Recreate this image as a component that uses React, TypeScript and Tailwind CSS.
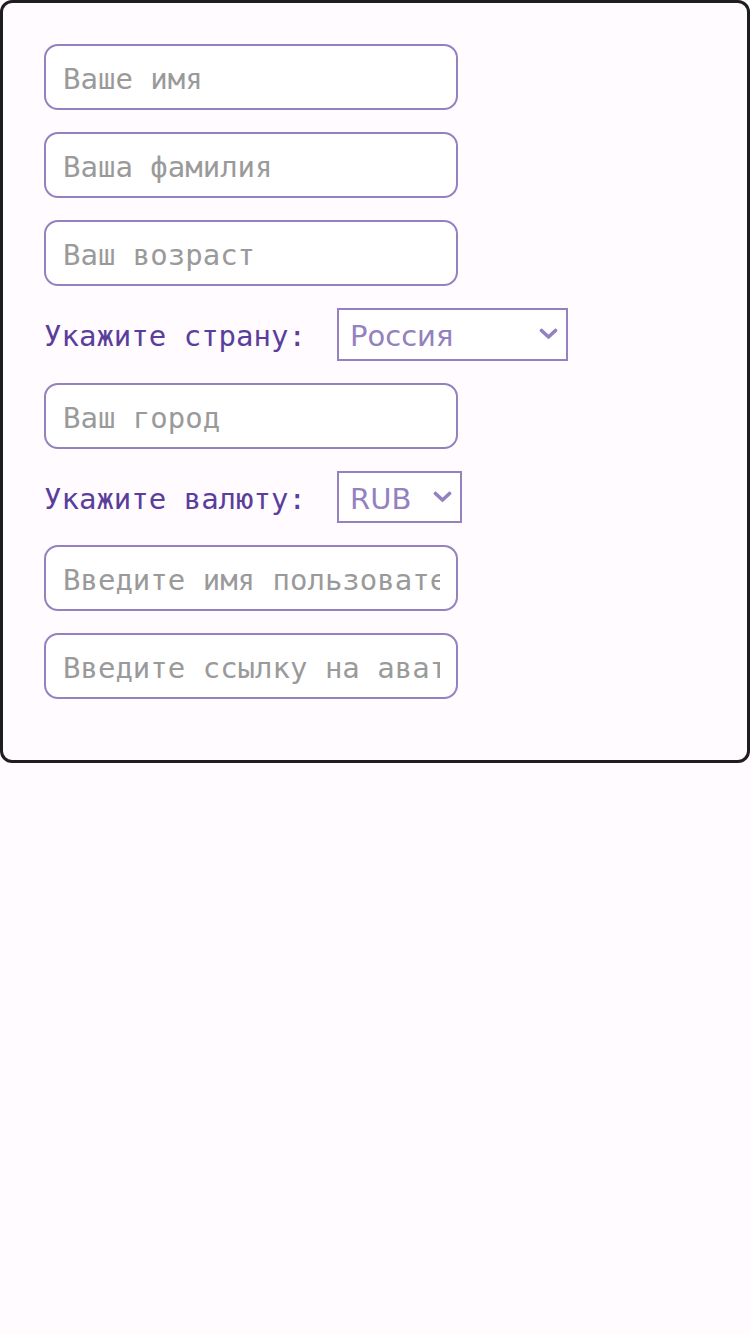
import { useState } from "react";

const mono = "font-['DejaVu_Sans_Mono','Liberation_Mono',monospace]";

function Chevron() {
  return (
    <svg
      className="pointer-events-none absolute right-[10px] top-1/2 -translate-y-1/2"
      width="19"
      height="12"
      viewBox="0 0 19 12"
    >
      <path d="M2.5 2.5 L9.5 9 L16.5 2.5" fill="none" stroke="#9381c0" strokeWidth="3.6" strokeLinecap="round" strokeLinejoin="round" />
    </svg>
  );
}

function Field({ placeholder }: { placeholder: string }) {
  return (
    <input
      type="text"
      placeholder={placeholder}
      className={`${mono} w-[414px] h-[66px] rounded-[14px] border-2 border-[#9381c0] bg-white pl-[17px] pr-[16px] pt-[4px] text-[29px] text-[#5a3e9c] placeholder:text-[#9a9a9a] outline-none`}
    />
  );
}

function SelectRow({
  label,
  options,
  width,
}: {
  label: string;
  options: string[];
  width: string;
}) {
  const [value, setValue] = useState(options[0]);
  return (
    <div className="flex items-center h-[52.5px]">
      <label className={`${mono} text-[29px] text-[#5a3e9c] w-[293px] shrink-0 pt-[5px] whitespace-pre`}>{label}</label>
      <div className={`relative ${width} h-[52.5px]`}>
        <select
          value={value}
          onChange={(e) => setValue(e.target.value)}
          className="appearance-none w-full h-full border-2 border-[#9381c0] bg-white pl-[11px] pr-[36px] pt-[5px] text-[29px] text-[#9381c0] font-['DejaVu_Sans','Liberation_Sans',sans-serif] outline-none rounded-none"
        >
          {options.map((o) => (
            <option key={o}>{o}</option>
          ))}
        </select>
        <Chevron />
      </div>
    </div>
  );
}

export default function App() {
  return (
    <div className="min-h-[1334px] bg-[#fffbfe]">
      <form className="w-[750px] border-[3px] border-[#1e1d22] rounded-[12px] pt-[41px] pl-[41px] pb-[61px] flex flex-col gap-[22px]">
        <Field placeholder="Ваше имя" />
        <Field placeholder="Ваша фамилия" />
        <Field placeholder="Ваш возраст" />
        <SelectRow label="Укажите страну:" options={["Россия", "Беларусь", "Казахстан"]} width="w-[231px]" />
        <Field placeholder="Ваш город" />
        <SelectRow label="Укажите валюту:" options={["RUB", "USD", "EUR"]} width="w-[125px]" />
        <Field placeholder="Введите имя пользователя" />
        <Field placeholder="Введите ссылку на аватар" />
      </form>
    </div>
  );
}
